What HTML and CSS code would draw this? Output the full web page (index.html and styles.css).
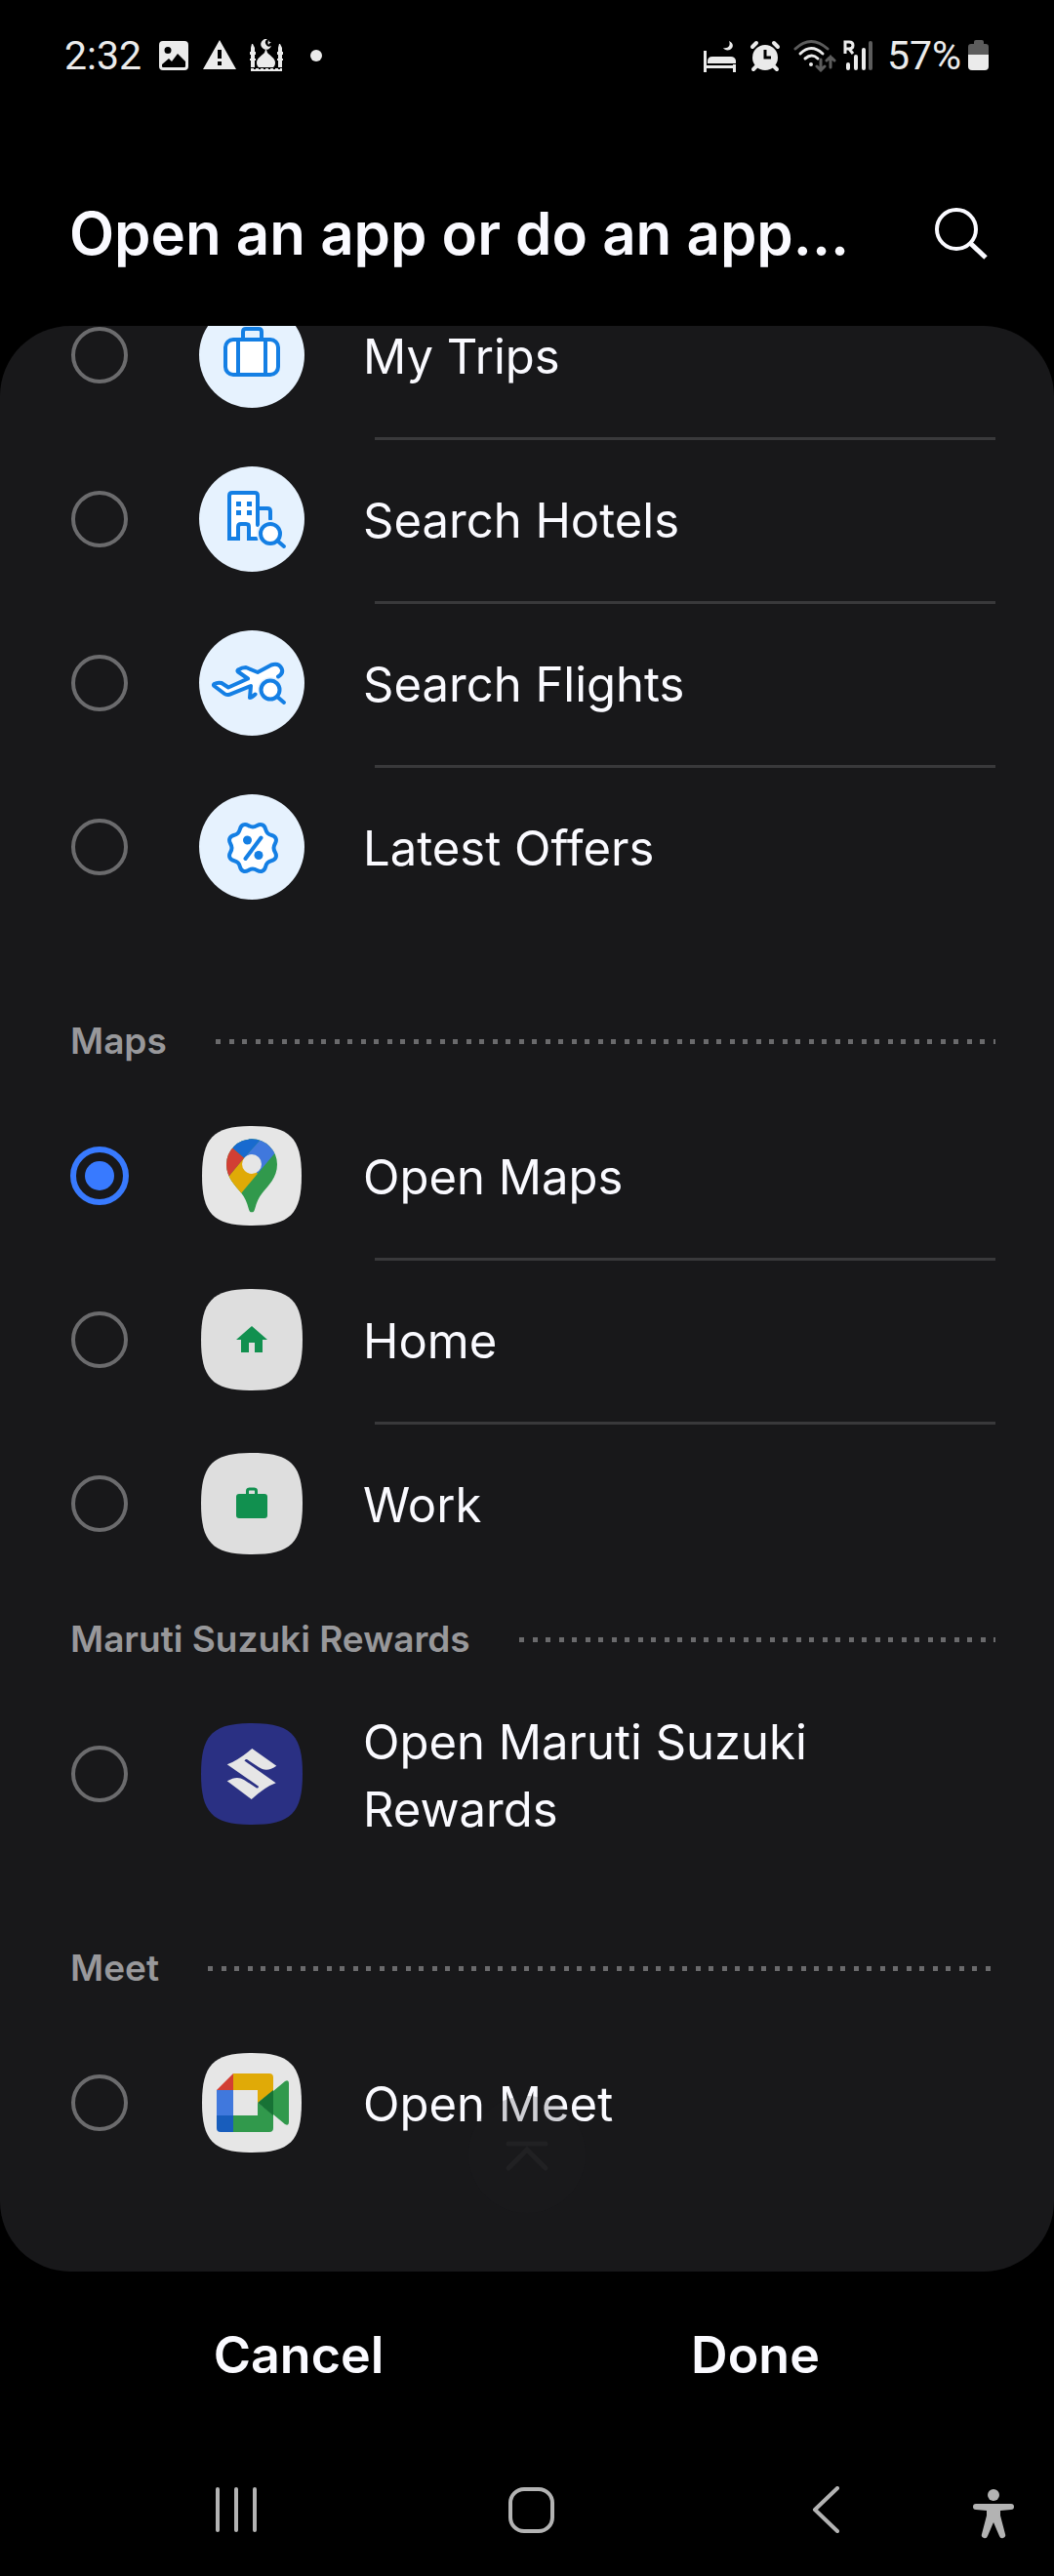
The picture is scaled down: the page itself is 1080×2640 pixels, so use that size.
FILE: index.html
```html
<!DOCTYPE html>
<html lang="en">
<head>
<meta charset="utf-8">
<meta name="viewport" content="width=device-width, initial-scale=1">
<title>Open an app or do an app action</title>
<link rel="stylesheet" href="styles.css">
</head>
<body>
<div class="screen">
  <div class="status">
    <div class="status-group">
      <span class="status-text">2:32</span>
      <div class="notifications">
        <svg width="32" height="34" viewBox="0 0 32 34"><path fill="#ebebeb" fill-rule="evenodd" d="M5 2h22q4 0 4 4v22q0 4-4 4H5q-4 0-4-4V6q0-4 4-4zM10 8a3 3 0 1 0 0 7 3 3 0 0 0 0-7zM4 28q0 1 1 1h22q1 0 1-1v-5l-8-8-6 8-3-3-7 6z"/></svg>
        <svg width="34" height="34" viewBox="0 0 34 34"><path fill="#ebebeb" fill-rule="evenodd" d="M17 1 34 31H0zM15 11v9h4v-9zm0 12v4h4v-4z"/></svg>
        <svg width="34" height="34" viewBox="0 0 34 34"><g fill="#ebebeb"><path d="M18 0a5.500 5.500 0 1 0 4 7 4 4 0 1 1-4-7z"/><path d="m19 1 1 2 2 .5-2 1L19 6l-.5-2z"/><path d="M16 11h1l1 3c3 3 8 6 8 10 0 3-1 4-2 5H9c-1-1-2-2-2-5 0-4 5-7 8-10z"/><path d="M2 5h1l2 4v4h1v3H5v4h1v2H5v7H1v-7H0v-2h1v-4H0v-3h1V9zM30 5h1l2 4v4h1v3h-1v4h1v2h-1v7h-4v-7h-1v-2h1v-4h-1v-3h1V9z"/><path d="M1 30h3v1h2v-1h3v1h2v-1h3v1h2v-1h3v1h2v-1h3v1h2v-1h3v1h2v-1h2v3H1z"/></g></svg>
        <svg class="more" width="12" height="12" viewBox="0 0 12 12"><circle cx="6" cy="6" r="6" fill="#ebebeb"/></svg>
      </div>
    </div>
    <div class="status-group indicators">
      <svg width="34" height="34" viewBox="0 0 34 34"><g fill="#ebebeb"><path d="M0 12h3v15h27v-1h3v8h-3v-4H3v4H0z"/><path d="M4 25v-2q0-5 5-5h19q4 0 5 4v3z"/><path d="M26 2c5 2 5 7 1 9-3 1-6 0-7-2 5 1 8-2 6-7z"/></g></svg>
      <svg width="32" height="34" viewBox="0 0 32 34"><g fill="none" stroke="#ebebeb" stroke-width="4" stroke-linecap="round"><path d="m3 8 4-4M29 8l-4-4M7 28l-3 3M25 28l3 3"/></g><circle cx="16" cy="19" r="13" fill="#ebebeb"/><path d="M16 11v8h6" fill="none" stroke="#000" stroke-width="3"/></svg>
      <svg width="44" height="34" viewBox="0 0 44 34"><g fill="none" stroke-linecap="round" stroke-width="3"><path stroke="#5c5c5c" d="M2 10Q18-5 35 10"/><path stroke="#ebebeb" d="M7 15q11-11 23 0M12 20q7-6 13 0"/><path stroke="#5c5c5c" d="M28 21v11m-4-4 4 4 4-4M38 29V18m-4 4 4-4 4 4"/></g><circle cx="18" cy="26" r="2" fill="#ebebeb"/></svg>
      <svg class="signal" width="32" height="34" viewBox="0 0 32 34"><path d="M2 15V3h4q4 0 4 3.500T6 10H2m4 0 4 5" fill="none" stroke="#ebebeb" stroke-width="3"/><path d="M5 26v4M13 18v12M21 11v19" stroke="#ebebeb" stroke-width="4" stroke-linecap="round"/><path d="M28 4v26" stroke="#5c5c5c" stroke-width="4" stroke-linecap="round"/></svg>
      <span class="status-text">57%</span>
      <svg class="battery" width="22" height="34" viewBox="0 0 22 34"><path d="M6 5V3q0-2 2-2h6q2 0 2 2v2h2q3 0 3 3v9H0V8q0-3 3-3z" fill="#5c5c5c"/><path d="M0 16h21v12q0 4-4 4H4q-4 0-4-4z" fill="#ebebeb"/></svg>
    </div>
  </div>

  <header class="header">
    <h1 class="title">Open an app or do an app...</h1>
    <button class="icon-button" type="button" aria-label="Search">
      <svg width="56" height="56" viewBox="0 0 56 56"><g fill="none" stroke="#fafaff" stroke-width="4"><circle cx="24" cy="24" r="20"/><path d="m38 38 16 15" stroke-width="5"/></g></svg>
    </button>
  </header>

  <main class="panel">
    <form class="list" id="actions">
      <section class="group">
        <label class="row">
          <input class="radio" type="radio" name="action">
          <svg class="app" viewBox="0 0 108 108"><circle cx="54" cy="54" r="54" fill="#e6f2fe"/><g fill="#fff" stroke="#147fe4" stroke-width="4"><path d="M45 38v-8q0-3 3-3h13q3 0 3 3v8" fill="none"/><rect x="27" y="38" width="54" height="36" rx="8"/><path d="M40 38v36M68 38v36"/></g></svg>
          <span class="label">My Trips</span>
        </label>
        <label class="row">
          <input class="radio" type="radio" name="action">
          <svg class="app" viewBox="0 0 108 108"><circle cx="54" cy="54" r="54" fill="#e6f2fe"/><g fill="#fff" stroke="#147fe4" stroke-width="4" stroke-linecap="round"><path d="M59 74h-8V62q0-3-3-3h-5q-3 0-3 3v12h-9V30q0-3 3-3h23q3 0 3 3v30"/><path d="M61 43h9q3 0 3 3v8" fill="none"/><circle cx="73" cy="69" r="14" stroke="none" fill="#e6f2fe"/><circle cx="73" cy="69" r="10"/><path d="m80 76 7 6"/></g><path fill="#147fe4" d="M38 36h5v5h-5zM49 36h5v5h-5zM38 45h5v5h-5zM49 45h5v5h-5z"/></svg>
          <span class="label">Search Hotels</span>
        </label>
        <label class="row">
          <input class="radio" type="radio" name="action">
          <svg class="app" viewBox="0 0 108 108"><circle cx="54" cy="54" r="54" fill="#e6f2fe"/><g fill="#fff" stroke="#147fe4" stroke-width="4" stroke-linecap="round" stroke-linejoin="round"><path d="M81 47.500C85 45 86 42 84.500 39c-2-4-6-5-10.500-3.500L60 43l-12-5q-4 0-8 2.500-1 1 0 2l10 7-20 9-7-4.500q-4-1-7.500 1-1 1 0 2L26 65q2 1.500 5 .8L53 57l-1 12q2 0 5.500-3.500"/><circle cx="73" cy="61" r="13" stroke="none" fill="#e6f2fe"/><circle cx="73" cy="61" r="9.500"/><path d="m80 68 7 6"/></g></svg>
          <span class="label">Search Flights</span>
        </label>
        <label class="row">
          <input class="radio" type="radio" name="action">
          <svg class="app" viewBox="0 0 108 108"><circle cx="54" cy="54" r="54" fill="#e6f2fe"/><g transform="translate(55 55)"><path d="M0-21.500C4.500-21.500 5.600-25.300 9.800-23.600S12-18.400 15.200-15.200 21.900-14 23.600-9.800 21.500-4.500 21.500 0 25.300 5.600 23.600 9.800 18.400 12 15.200 15.200 14 21.900 9.800 23.600 4.500 21.500 0 21.500-5.600 25.300-9.800 23.600-12 18.400-15.200 15.200-21.900 14-23.600 9.800-21.500 4.500-21.500 0-25.300-5.600-23.600-9.800-18.400-12-15.200-15.200-14-21.900-9.800-23.600-4.500-21.500 0-21.500z" fill="#fff" stroke="#147fe4" stroke-width="4"/><path d="M8.500-10.500-7.500 11" stroke="#147fe4" stroke-width="4" stroke-linecap="round"/><g fill="#147fe4"><circle cx="-5.500" cy="-8" r="4.500"/><circle cx="6" cy="7.500" r="4.500"/></g></g></svg>
          <span class="label">Latest Offers</span>
        </label>
      </section>

      <section class="group">
        <h2 class="group-title">Maps</h2>
        <label class="row">
          <input class="radio" type="radio" name="action" checked>
          <svg class="app" viewBox="0 0 108 108"><defs><clipPath id="pin"><path d="M54 16.300A26 26 0 0 1 80 42.300C80 56 71 64 64.700 71.700 61 76.500 59 81 57.300 87.500 56.500 90.500 56 91.300 54 91.300s-2.500-.8-3.300-3.800C49 81 47 76.500 43.300 71.700 37 64 28 56 28 42.300A26 26 0 0 1 54 16.300z"/></clipPath></defs><path fill="#e6e6e6" d="M3 54C3 15 15 3 54 3s51 12 51 51-12 51-51 51S3 93 3 54z"/><g clip-path="url(#pin)"><path fill="#31994c" d="M20 10h70v90H20z"/><path fill="#e0aa07" d="M43.300 71.700 60 51.700l-6-9.400-8-6.600-15.700 19L20 72z"/><path fill="#4078dd" d="M60 51.700 90 16 63.700 16 46 35.700l8 6.600z"/><path fill="#186acf" d="M34.700 26 46 35.700 63.700 16 30 10z"/><path fill="#d23f34" d="M34.700 26 46 35.700l-15.700 19L20 66V14z"/></g><circle cx="54" cy="42" r="10" fill="#e6e6e6"/></svg>
          <span class="label">Open Maps</span>
        </label>
        <label class="row">
          <input class="radio" type="radio" name="action">
          <svg class="app" viewBox="0 0 108 108"><path fill="#dedede" d="M2 54C2 14 14 2 54 2s52 12 52 52-12 52-52 52S2 94 2 54z"/><path fill="#11904f" d="m54 40 16 14h-5v13h-8V57h-6v10h-8V54h-5z"/></svg>
          <span class="label">Home</span>
        </label>
        <label class="row">
          <input class="radio" type="radio" name="action">
          <svg class="app" viewBox="0 0 108 108"><path fill="#dedede" d="M2 54C2 14 14 2 54 2s52 12 52 52-12 52-52 52S2 94 2 54z"/><rect x="38" y="44" width="32" height="25" rx="3" fill="#11904f"/><path d="M49.500 45v-4q0-2 2-2h5q2 0 2 2v4" fill="none" stroke="#11904f" stroke-width="3"/></svg>
          <span class="label">Work</span>
        </label>
      </section>

      <section class="group group-tight">
        <h2 class="group-title">Maruti Suzuki Rewards</h2>
        <label class="row">
          <input class="radio" type="radio" name="action">
          <svg class="app" viewBox="0 0 108 108"><path fill="#2a3083" d="M2 54C2 14 14 2 54 2s52 12 52 52-12 52-52 52S2 94 2 54z"/><path fill="#e6e6e6" d="M54.300 28 79.300 45.700C72 51 66 50.500 61 47L49 39q-2-.5-2.500 1.500L78.700 63.300Q68 67 53.700 80L28.700 61.300C36 57 41 57 46 60l13 8.500q2 .3 2-1.800L28.700 44.300Q40 40 54.300 28z"/></svg>
          <span class="label">Open Maruti Suzuki Rewards</span>
        </label>
      </section>

      <section class="group">
        <h2 class="group-title">Meet</h2>
        <label class="row">
          <input class="radio" type="radio" name="action">
          <svg class="app" viewBox="0 0 108 108"><path fill="#e6e6e6" d="M3 54C3 15 15 3 54 3s51 12 51 51-12 51-51 51S3 93 3 54z"/><path fill="#d23f34" d="M35 24v17H18z"/><path fill="#4078dd" d="M18 41h17v26H18z"/><path fill="#185dbc" d="M18 67h17v17H22q-4 0-4-4z"/><path fill="#e0aa07" d="M35 24h37q4 0 4 4v14L60 54V41H35z"/><path fill="#31994c" d="M35 67h25V54l16 12v14q0 4-4 4H35zM76 42l12-10q4-2 4 2v40q0 4-4 2L76 66z"/><path fill="#177235" d="M60 54 76 41v26z"/></svg>
          <span class="label">Open Meet</span>
        </label>
      </section>
    </form>
    <button class="to-top" type="button" aria-label="Go to top">
      <svg width="48" height="36" viewBox="0 0 48 36"><path d="M5 5h38M5 30 24 11l19 19" fill="none" stroke="#212123" stroke-width="5" stroke-linecap="round"/></svg>
    </button>
  </main>

  <footer class="actions">
    <button class="action" type="button">Cancel</button>
    <button class="action" type="submit" form="actions">Done</button>
  </footer>

  <nav class="nav" aria-label="System navigation">
    <button class="icon-button" type="button" aria-label="Recents"><svg width="48" height="48" viewBox="0 0 48 48"><path d="M5 3v42M24 3v42M43 3v42" stroke="#b3b3b3" stroke-width="4" stroke-linecap="round"/></svg></button>
    <button class="icon-button" type="button" aria-label="Home"><svg width="48" height="48" viewBox="0 0 48 48"><rect x="3" y="3" width="43" height="43" rx="14" fill="none" stroke="#b3b3b3" stroke-width="4"/></svg></button>
    <button class="icon-button" type="button" aria-label="Back"><svg width="48" height="48" viewBox="0 0 48 48"><path d="M36 2 13 24l23 22" fill="none" stroke="#b3b3b3" stroke-width="4" stroke-linecap="round" stroke-linejoin="round"/></svg></button>
    <button class="icon-button accessibility" type="button" aria-label="Accessibility"><svg width="42" height="52" viewBox="0 0 42 52"><g fill="#b3b3b3"><circle cx="21" cy="7" r="6"/><path d="M3 16h36q3 0 3 3t-3 3l-11 1v5l5 19q1 3-2 4t-4-2l-6-14-6 14q-1 3-4 2t-2-4l5-19v-5L3 22q-3 0-3-3t3-3z"/></g></svg></button>
  </nav>
</div>
</body>
</html>
```
FILE: styles.css
```css
* {
  box-sizing: border-box;
}

body {
  margin: 0;
  background: #000;
  color: #fafaff;
  font-family: Inter, "Liberation Sans", sans-serif;
}

button {
  border: 0;
  padding: 0;
  background: none;
  color: inherit;
  font: inherit;
}

svg {
  display: block;
  flex: none;
}

.screen {
  display: flex;
  flex-direction: column;
  min-height: 100vh;
}

/* Status bar */
.status {
  display: flex;
  justify-content: space-between;
  align-items: center;
  height: 114px;
  padding: 0 66px;
}

.status-group,
.notifications {
  display: flex;
  align-items: center;
}

.status-group {
  gap: 17px;
}

.notifications {
  gap: 14px;
}

.more {
  margin-left: 14px;
}

.indicators {
  gap: 13px;
}

.signal,
.battery {
  margin-left: -6px;
}

.status-text {
  color: #ebebeb;
  font-family: Roboto, sans-serif;
  font-size: 41px;
  line-height: 48px;
}

/* Title bar */
.header {
  display: flex;
  justify-content: space-between;
  align-items: center;
  height: 220px;
  padding: 54px 68px 24px 71px;
}

.title {
  min-width: 0;
  margin: 0;
  overflow: hidden;
  font-size: 60px;
  font-weight: 600;
  line-height: 80px;
  text-overflow: ellipsis;
  white-space: nowrap;
}

.icon-button {
  display: flex;
  justify-content: center;
  align-items: center;
}

/* Scrolled list of app actions */
.panel {
  position: relative;
  overflow: hidden;
  padding-bottom: 89px;
  border-radius: 72px;
  background: #18181a;
}

.list {
  margin-top: -54px;
}

.group + .group {
  margin-top: 61px;
}

.group + .group-tight {
  margin-top: 1px;
}

.group-title {
  display: flex;
  align-items: center;
  gap: 50px;
  height: 108px;
  margin: 0;
  padding: 0 60px 0 72px;
  color: #98989b;
  font-size: 37px;
  font-weight: 600;
  line-height: 48px;
}

.group-title::after {
  content: "";
  flex: 1;
  height: 5px;
  background: repeating-linear-gradient(90deg, #6a6a6c 0 5px, transparent 5px 14px, #6a6a6c 14px 19px, transparent 19px 27px);
}

.row {
  position: relative;
  display: flex;
  align-items: center;
  min-height: 168px;
  padding: 0 120px 0 72px;
}

.row + .row::before {
  content: "";
  position: absolute;
  top: 0;
  right: 60px;
  left: 384px;
  height: 3px;
  background: #39393b;
}

.radio {
  flex: none;
  display: grid;
  place-items: center;
  width: 58px;
  height: 58px;
  margin: 0 1px;
  border: 4px solid #6b6b6d;
  border-radius: 50%;
  appearance: none;
}

.radio:checked {
  width: 60px;
  height: 60px;
  margin: 0;
  border: 6px solid #387aff;
}

.radio:checked::before {
  content: "";
  width: 30px;
  height: 30px;
  border-radius: 50%;
  background: #387aff;
}

.app {
  width: 108px;
  height: 108px;
  margin: 0 60px 0 72px;
}

.label {
  max-width: 500px;
  padding-top: 3px;
  font-size: 49px;
  line-height: 69px;
}

.to-top {
  position: absolute;
  bottom: 60px;
  left: 50%;
  display: flex;
  justify-content: center;
  align-items: center;
  width: 120px;
  height: 120px;
  margin-left: -60px;
  padding-top: 4px;
  border-radius: 50%;
  background: rgba(32, 32, 34, 0.2);
}

/* Dialog buttons */
.actions {
  display: grid;
  grid-template-columns: 1fr 1fr;
  height: 172px;
  padding: 0 72px;
}

.action {
  font-size: 52px;
  font-weight: 600;
  line-height: 64px;
}

/* System navigation bar */
.nav {
  display: grid;
  grid-template-columns: 1fr 1fr 1fr 83px;
  align-items: center;
  height: 140px;
  margin-top: auto;
  padding: 4px 0 0 91px;
}

.accessibility {
  justify-content: flex-start;
  padding-top: 8px;
}
```
